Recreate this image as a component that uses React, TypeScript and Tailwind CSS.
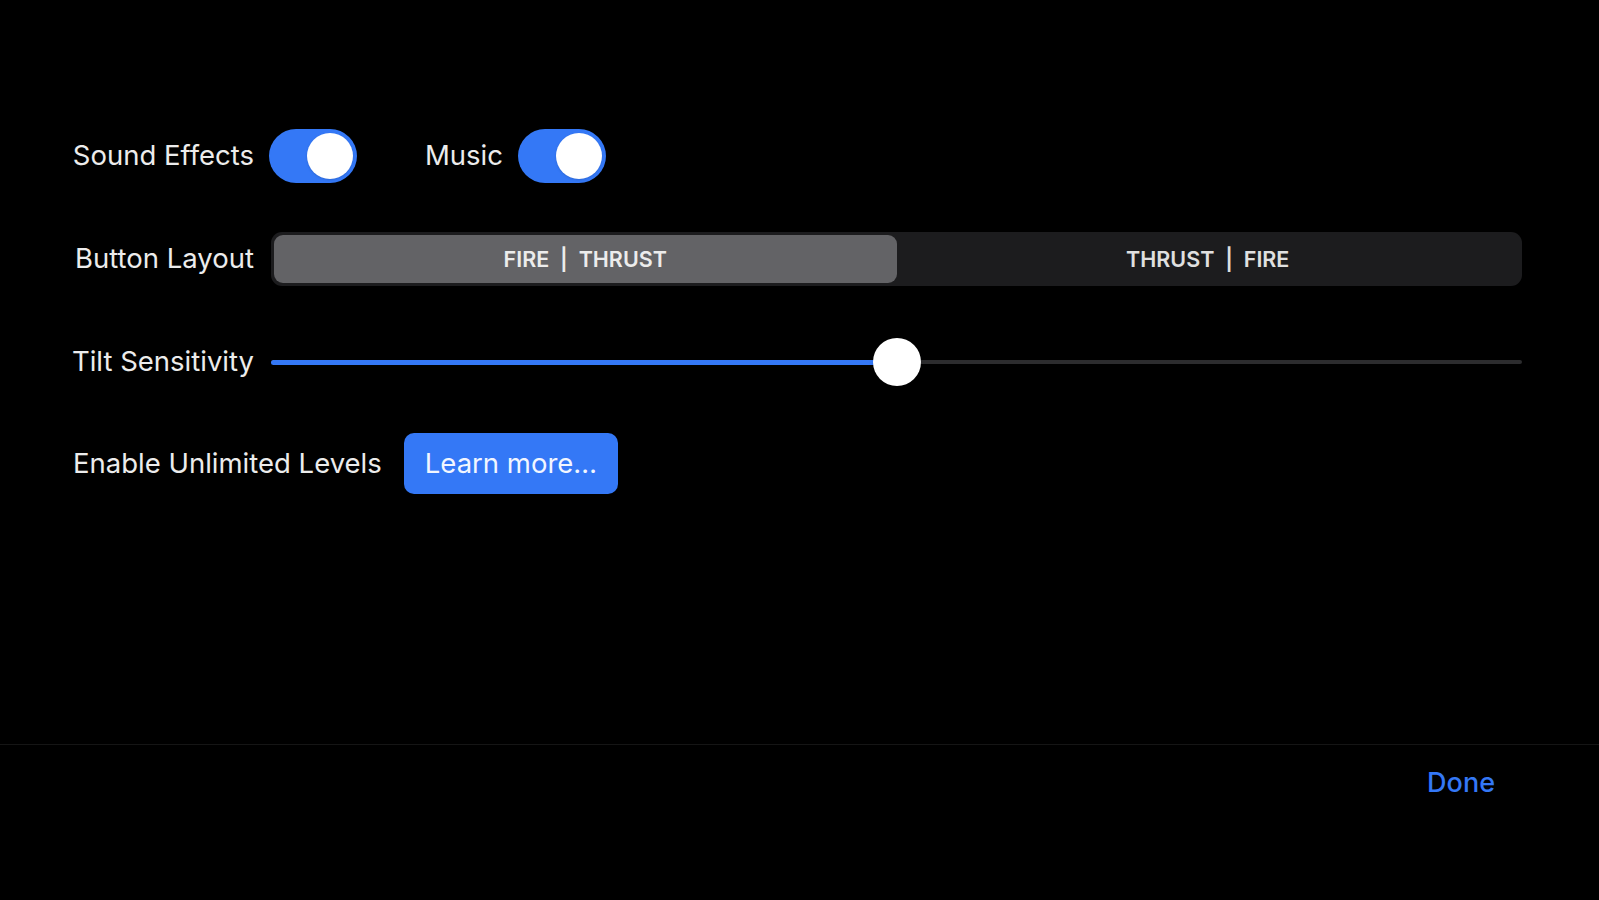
import React, { useState } from 'react'

function Toggle({ on }: { on: boolean }) {
    return (
        <div
            className={`flex h-[54px] w-[88px] items-center rounded-full p-[4px] ${
                on ? 'justify-end bg-[#3478f6]' : 'justify-start bg-[#39393d]'
            }`}>
            <div className="h-[46px] w-[46px] rounded-full bg-white shadow" />
        </div>
    )
}

export default function App() {
    const [layout, setLayout] = useState(0)
    const tilt = 0.5

    return (
        <div
            className="flex h-[900px] w-full flex-col bg-black text-[#ececec]"
            style={{ fontFamily: 'Inter, "Noto Sans", sans-serif' }}>
            <div className="flex flex-1 flex-col pl-[71px] pr-[77px] pt-[129px]">
                <div className="flex h-[54px] items-center">
                    <span className="w-[183px] whitespace-nowrap text-right text-[27.5px]">Sound Effects</span>
                    <div className="ml-[15px]">
                        <Toggle on />
                    </div>
                    <span className="ml-[68px] text-[27.5px]">Music</span>
                    <div className="ml-[15px]">
                        <Toggle on />
                    </div>
                </div>

                <div className="mt-[49px] flex h-[54px] items-center">
                    <span className="w-[183px] whitespace-nowrap text-right text-[27.5px]">Button Layout</span>
                    <div className="ml-[17px] flex h-[54px] flex-1 rounded-[11px] bg-[#1c1c1e] p-[3px]">
                        {['FIRE  |  THRUST', 'THRUST  |  FIRE'].map((t, i) => (
                            <button
                                key={t}
                                onClick={() => setLayout(i)}
                                className={`flex flex-1 items-center justify-center whitespace-pre rounded-[9px] text-[21.5px] font-semibold ${
                                    layout === i ? 'bg-[#636366] text-[#ececec]' : 'text-[#e0e0e0]'
                                }`}>
                                {t}
                            </button>
                        ))}
                    </div>
                </div>

                <div className="mt-[49px] flex h-[54px] items-center">
                    <span className="w-[183px] whitespace-nowrap text-right text-[27.5px]">Tilt Sensitivity</span>
                    <div className="relative ml-[17px] flex h-[54px] flex-1 items-center">
                        <div className="h-[4px] w-full rounded-full bg-[#2c2c2e]" />
                        <div
                            className="absolute left-0 h-[5px] rounded-full bg-[#3478f6]"
                            style={{ width: `${tilt * 100}%` }}
                        />
                        <div
                            className="absolute h-[48px] w-[48px] -translate-x-1/2 rounded-full bg-white shadow-md"
                            style={{ left: `${tilt * 100}%` }}
                        />
                    </div>
                </div>

                <div className="mt-[44px] flex h-[61px] items-center">
                    <span className="ml-[2px] text-[27.5px]">Enable Unlimited Levels</span>
                    <button className="ml-[22px] h-[61px] rounded-[10px] bg-[#3478f6] px-[21px] text-[27.5px] text-[#f2f6ff]">
                        Learn more…
                    </button>
                </div>
            </div>

            <div className="flex h-[156px] flex-col border-t border-[#151515]">
                <div className="flex h-[76px] items-center justify-end pr-[104px]">
                    <button className="text-[27px] font-medium text-[#3478f6]">Done</button>
                </div>
            </div>
        </div>
    )
}
